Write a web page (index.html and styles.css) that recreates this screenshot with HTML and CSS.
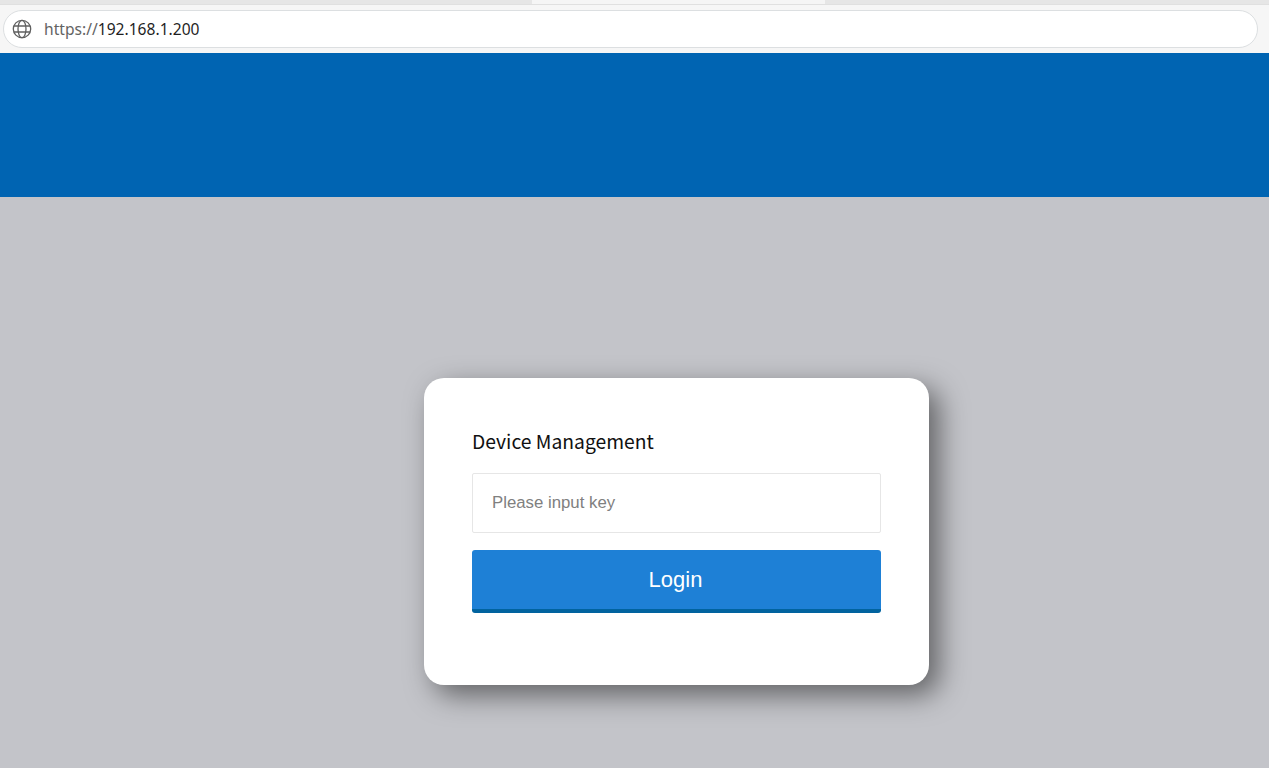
FILE: index.html
```html
<!DOCTYPE html>
<html lang="en">
<head>
    <meta charset="UTF-8">
    <title>Device Management</title>
    <link rel="stylesheet" href="styles.css">
</head>
<body>
    <div class="tabstrip">
        <div class="tab tab-first"></div>
        <div class="tab-active"></div>
        <div class="tab"></div>
    </div>
    <div class="toolbar">
        <div class="address-bar">
            <svg class="globe" width="20" height="20" viewBox="0 0 20 20" fill="none" stroke="#5f5f5f" stroke-width="1.3">
                <circle cx="10" cy="10" r="8.7"/>
                <ellipse cx="10" cy="10" rx="4" ry="8.7"/>
                <path d="M2 7h16M2 13h16"/>
            </svg>
            <span class="url"><span class="scheme">https://</span>192.168.1.200</span>
        </div>
    </div>
    <div class="header"></div>
    <div class="main">
        <div class="login-card">
            <div class="login-title">Device Management</div>
            <input class="key-input" type="text" placeholder="Please input key">
            <button class="login-button">Login</button>
        </div>
    </div>
</body>
</html>
```

FILE: styles.css
```css
html, body {
    height: 100%;
}

body {
    margin: 0;
    overflow: hidden;
    display: flex;
    flex-direction: column;
    background-color: #c3c4c9;
    font-family: "Liberation Sans", Arial, sans-serif;
}

.tabstrip {
    height: 4px;
    display: flex;
    background-color: #e9e9e9;
}

.tab {
    flex: 1;
    background-color: #e6e6e6;
}

.tab-first {
    flex: none;
    width: 532px;
}

.tab-active {
    width: 293px;
    background-color: #f5f5f5;
}

.toolbar {
    height: 49px;
    box-sizing: border-box;
    padding: 5px 11px 0 3px;
    background-color: #f6f6f6;
    border-top: 1px solid #e0e0e0;
}

.address-bar {
    height: 38px;
    box-sizing: border-box;
    display: flex;
    align-items: center;
    gap: 12px;
    padding-left: 8px;
    background-color: #fff;
    border: 1px solid #dcdfe1;
    border-radius: 19px;
}

.url {
    font-family: "Noto Sans", sans-serif;
    font-size: 15.6px;
    color: #1f1f1f;
}

.scheme {
    color: #636363;
}

.header {
    height: 144px;
    background-color: #0064b2;
}

.main {
    flex: 1;
    padding: 181px 0 0 424px;
}

.login-card {
    width: 505px;
    height: 307px;
    box-sizing: border-box;
    padding: 48px 48px 0;
    background-color: #fff;
    border-radius: 20px;
    box-shadow: 10px 10px 28px rgba(0, 0, 0, 0.5);
}

.login-title {
    height: 30px;
    line-height: 30px;
    margin-bottom: 17px;
    font-family: "Noto Sans CJK SC", "Noto Sans", sans-serif;
    font-size: 19.3px;
    color: #111;
}

.key-input {
    display: block;
    width: 100%;
    height: 60px;
    box-sizing: border-box;
    padding: 0 19px;
    border: 1px solid #e6e6e6;
    border-radius: 2px;
    outline: none;
    font-family: "Liberation Sans", Arial, sans-serif;
    font-size: 16.8px;
}

.key-input::placeholder {
    color: #808080;
}

.login-button {
    display: block;
    width: 100%;
    height: 63px;
    margin-top: 17px;
    padding: 0 2px 0 0;
    background-color: #1e80d6;
    border: none;
    border-bottom: 4px solid #01639f;
    border-radius: 3px;
    color: #fff;
    font-family: "Liberation Sans", Arial, sans-serif;
    font-size: 22px;
}
```
